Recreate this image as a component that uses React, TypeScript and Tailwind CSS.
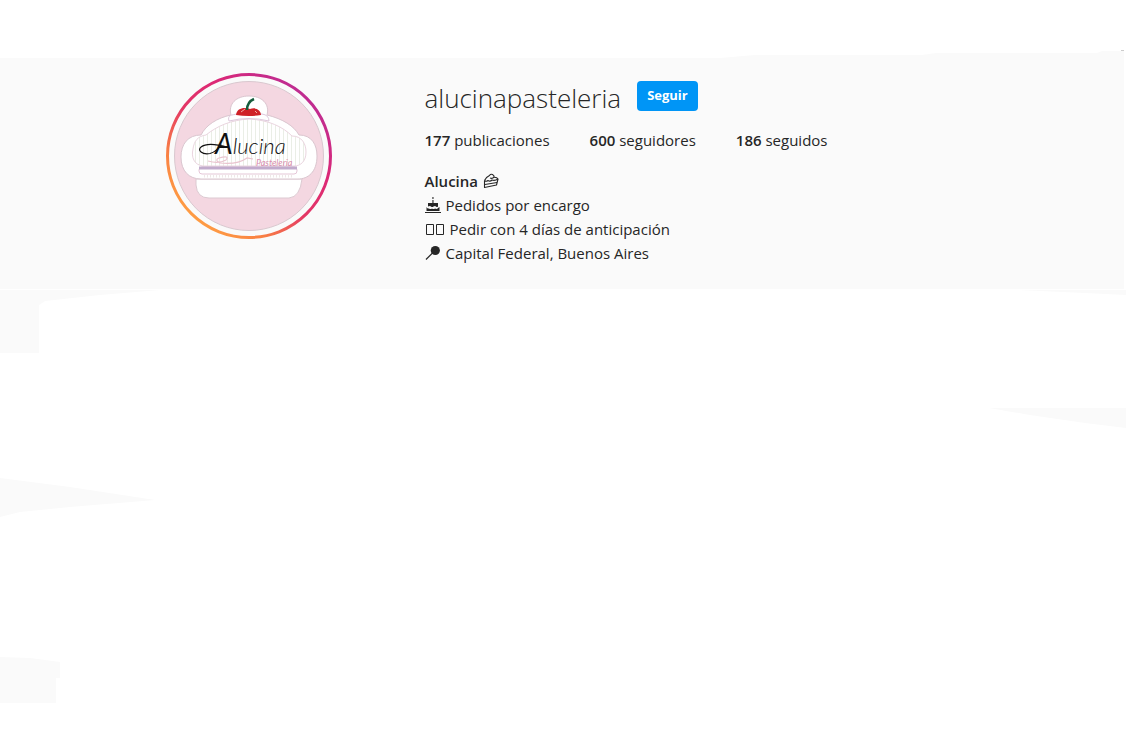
import type { ReactNode } from "react";

const stats = [
  { value: "177", label: "publicaciones" },
  { value: "600", label: "seguidores" },
  { value: "186", label: "seguidos" },
];

function SliceIcon() {
  return (
    <svg className="h-4 w-4 shrink-0" viewBox="0 0 16 16" fill="none" stroke="#262626" strokeWidth="1.1" strokeLinejoin="round" aria-hidden="true">
      <path d="M1.500 7.500 L1.500 14.500 L13.500 12 L15 6 Q14 4 11 4.200" />
      <path d="M1.500 7.500 Q3 4 6.500 2.500 Q7.500 0.800 9.500 1.500 Q11.500 2.500 11 4.200 Q9.500 6 7 5 M1.500 7.500 Q3 9 5 7.500 Q7 9 9 7 Q12 8 15 6 M2 11.500 L14 9.500" />
    </svg>
  );
}

function CakeIcon() {
  return (
    <svg className="h-4 w-4 shrink-0" viewBox="0 0 16 16" fill="#262626" aria-hidden="true">
      <path d="M7.400 0h1.100v2h-1.100zM7.400 3h1.100v3h-1.100zM3 6h10v3.500q-1 1-2 0t-2.500 0t-2.500 0t-3 0zM1.500 10q1 2 2.500 1.500q1.500 1 3 0q1.500 1 3 0q2 1 3-.5l1.500-1v4h-13zM0 15h16v1H0z" />
    </svg>
  );
}

function BoxesIcon() {
  return (
    <svg className="h-4 w-5 shrink-0" viewBox="0 0 20 16" fill="none" stroke="#262626" aria-hidden="true">
      <path d="M1.500 3.500h7v10h-7zM11.500 3.500h7v10h-7z" />
    </svg>
  );
}

function PinIcon() {
  return (
    <svg className="h-4 w-4 shrink-0" viewBox="0 0 16 16" aria-hidden="true">
      <path d="M1 14.500 L8 7.500" stroke="#262626" strokeWidth="1.200" />
      <circle cx="10.300" cy="5.500" r="4.600" fill="#262626" />
    </svg>
  );
}

function BioLine({ icon, children }: { icon: ReactNode; children: ReactNode }) {
  return (
    <p className="flex items-center gap-[5px]">
      {icon}
      <span>{children}</span>
    </p>
  );
}

function Avatar() {
  return (
    <svg className="h-[166px] w-[166px]" viewBox="0 0 166 166" role="img" aria-label="Alucina Pasteleria">
      <defs>
        <linearGradient id="ring" x1="0.150" y1="0.900" x2="0.850" y2="0.100">
          <stop offset="0" stopColor="#ff9f43" />
          <stop offset="0.200" stopColor="#f98043" />
          <stop offset="0.450" stopColor="#e43865" />
          <stop offset="0.700" stopColor="#dc2876" />
          <stop offset="1" stopColor="#bd2c93" />
        </linearGradient>
        <pattern id="stripes" width="4" height="10" patternUnits="userSpaceOnUse">
          <rect width="4" height="10" fill="#fff" />
          <path d="M1.500 0v10" stroke="#eaeee6" strokeWidth="1" />
        </pattern>
      </defs>
      <circle cx="83" cy="83" r="81.500" fill="none" stroke="url(#ring)" strokeWidth="3" />
      <circle cx="83" cy="83" r="74.500" fill="#f4d7e1" stroke="#d9c8cf" />
      <path d="M30 106 L30 112 Q31 125 43 125 H123 Q134 124 136 106 Z" fill="#fff" stroke="#dcc9d1" />
      <path d="M65 42 C62 31 70 23 83 23 C96 23 104 31 101 42 C117 46 128 53 133 62 C146 62 151 72 151 83 C151 99 142 106 132 106 H35 C23 106 15 98 15 84 C15 71 22 62 35 62 C40 52 51 45 65 42 Z" fill="#fff" stroke="#dac6cf" />
      <path d="M40 62 C51 53 65 47 83 46 C103 47 117 54 126 63 C136 63 140 71 140 79 C140 88 135 93 128 93 H37 C28 92 25 84 27 76 C28 68 32 63 40 62 Z" fill="url(#stripes)" stroke="#ead5df" />
      <path d="M63 48 C61 42 66 42 71 41 H96 Q103 42 103 48 Q83 43 63 48 Z" fill="#fff" stroke="#dec8dc" />
      <path d="M70 42 C71 35 78 34 84 36 C90 34 95 37 95 42 Q83 44 70 42 Z" fill="#cf2027" />
      <path d="M75 39 L79 36 M89 38 L91 40" stroke="#f1a7a4" />
      <path d="M81 37 Q81 29 88 26" fill="none" stroke="#155c3c" strokeWidth="2.500" />
      <rect x="33" y="94" width="98" height="7" rx="3" fill="#fff" stroke="#e5c6d7" />
      <path d="M33 95h98" stroke="#c1abcc" strokeWidth="3" />
      <path d="M38 103h90" stroke="#eee7e7" strokeWidth="3" strokeDasharray="1 2" />
      <path d="M42 88 Q53 91 60 87 Q64 82 53 85 Q48 87 54 90 Q71 92 81 85 L87 86" fill="none" stroke="#e9c4cf" strokeWidth="1.200" />
      <path d="M55 72 Q50 79 44 80.500 C36 82 31 77 35 74 C40 70 50 71 61 74" fill="none" stroke="#111" strokeWidth="1.200" strokeLinecap="round" />
      <text x="49" y="81" fontFamily="Lato, sans-serif" fontStyle="italic" fontWeight="300" fontSize="22" fill="#111">
        <tspan fontSize="28" fontWeight="400">A</tspan>lucina
      </text>
      <text x="90" y="93" fontFamily="Lato, sans-serif" fontStyle="italic" fontSize="9" fill="#d98eae">Pasteleria</text>
    </svg>
  );
}

function Backdrop() {
  return (
    <div className="pointer-events-none absolute inset-0 overflow-hidden" aria-hidden="true">
      <svg className="absolute right-0 top-0 h-[440px] w-[406px]" viewBox="0 0 406 440" fill="#fafafa">
        <path d="M0 58L35 55H202L216 53H377L382 51H404V58Z" />
        <path d="M401 50h3v1h-3z" fill="#ccc" />
        <path d="M298 290H406V295L365 293Z" />
        <path d="M269 408H406V428L365 423L310 415Z" />
      </svg>
      <svg className="absolute left-0 top-0 h-[739px] w-[160px]" viewBox="0 0 160 739" fill="#fafafa">
        <path d="M0 290H160L100 295L45 301L39 305V353H0Z" />
        <path d="M0 478L70 487L155 500L70 507L20 512L0 517Z" />
        <path d="M0 657L30 658L60 662V678H56V703H0Z" />
      </svg>
    </div>
  );
}

export default function App() {
  return (
    <div className="relative min-h-screen bg-white pt-[58px] font-['Open_Sans','Noto_Sans',sans-serif] text-[#262626]">
      <Backdrop />
      <header className="relative mr-0.5 bg-[#fafafa] pt-[15px] pb-6 pl-0.5">
        <div className="mx-auto flex max-w-[935px] gap-[22px]">
          <div className="flex w-[307px] shrink-0 justify-center">
            <Avatar />
          </div>
          <section className="pt-2">
            <div className="flex h-[30px] items-center gap-4">
              <h1 className="pt-1 text-[26px] leading-8 font-light">alucinapasteleria</h1>
              <button type="button" className="h-[30px] rounded-[4px] bg-[#0095f6] px-[10px] text-[13px] font-bold text-white">
                Seguir
              </button>
            </div>
            <ul className="mt-[17px] flex gap-10 text-[15px] leading-6">
              {stats.map((stat) => (
                <li key={stat.label}>
                  <span className="font-semibold">{stat.value}</span> {stat.label}
                </li>
              ))}
            </ul>
            <div className="mt-[17px] text-[15px] leading-6">
              <h2 className="flex items-center gap-[5px] font-semibold">
                Alucina <SliceIcon />
              </h2>
              <BioLine icon={<CakeIcon />}>Pedidos por encargo</BioLine>
              <BioLine icon={<BoxesIcon />}>Pedir con 4 días de anticipación</BioLine>
              <BioLine icon={<PinIcon />}>Capital Federal, Buenos Aires</BioLine>
            </div>
          </section>
        </div>
      </header>
    </div>
  );
}
